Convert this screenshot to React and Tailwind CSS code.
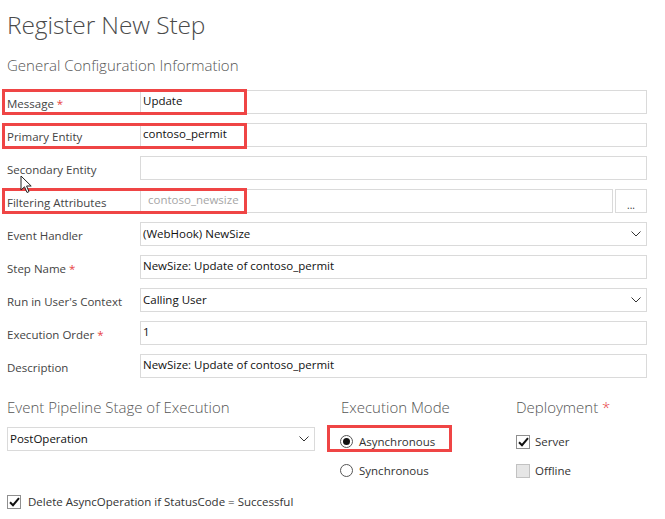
import React from "react";

const Chevron = () => (
  <svg width="10" height="6" viewBox="0 0 10 6" className="shrink-0">
    <path d="M0.5 0.5 L5 5 L9.5 0.5" fill="none" stroke="#333" strokeWidth="1" />
  </svg>
);

const Field = ({ label, req, children }) => (
  <div className="flex items-center h-[24px]">
    <div className="w-[133px] shrink-0 text-[#444] pt-[3px] whitespace-nowrap">
      {label}
      {req && <span className="text-[#e8413f]"> *</span>}
    </div>
    {children}
  </div>
);

const Box = ({ children, muted }) => (
  <div
    className={
      "flex-1 h-full border border-[#dadada] flex items-center pl-[2px] pb-[2px] whitespace-nowrap " +
      (muted ? "text-[#a6a6a6] pl-[7px]" : "text-[#111]")
    }
  >
    {children}
  </div>
);

const Select = ({ children }) => (
  <div className="flex-1 h-full border border-[#dadada] flex items-center justify-between pl-[2px] pr-[5px] pb-[1px] text-[#111] whitespace-nowrap">
    <span>{children}</span>
    <Chevron />
  </div>
);

const Check = ({ checked, disabled }) => (
  <div
    className={
      "w-[14px] h-[14px] border flex items-center justify-center shrink-0 " +
      (disabled ? "bg-[#e6e6e6] border-[#c2c2c2]" : "bg-white border-[#8f8f8f]")
    }
  >
    {checked && (
      <svg width="11" height="10" viewBox="0 0 11 10">
        <path d="M1 5.2 L4 8.2 L10 1.2" fill="none" stroke="#111" strokeWidth="2" />
      </svg>
    )}
  </div>
);

const Radio = ({ checked }) => (
  <div className="w-[13px] h-[13px] rounded-full border border-[#555] flex items-center justify-center shrink-0">
    {checked && <div className="w-[7px] h-[7px] rounded-full bg-[#111]" />}
  </div>
);

const heading = "text-[15px] leading-[20px] text-[#555] font-light whitespace-nowrap";

export default function App() {
  return (
    <div className="relative w-[665px] h-[519px] bg-white overflow-hidden font-['Open_Sans','Noto_Sans',sans-serif] text-[11.5px]">
      <div className="pl-[7px] pr-[18px] pt-[10px]">
        <div className="text-[24.5px] leading-[30px] font-light text-[#4a4a4a] tracking-[-0.1px]">Register New Step</div>
        <div className={"mt-[15px] " + heading}>General Configuration Information</div>

        <div className="mt-[15px] flex flex-col gap-[9px]">
          <Field label="Message" req>
            <Box>Update</Box>
          </Field>
          <Field label="Primary Entity">
            <Box>contoso_permit</Box>
          </Field>
          <Field label="Secondary Entity">
            <Box />
          </Field>
          <Field label="Filtering Attributes">
            <div className="flex flex-1 h-full gap-[2px]">
              <Box muted>contoso_newsize</Box>
              <div className="w-[32px] h-full border border-[#dadada] flex items-end justify-center pb-[1px] text-[10px] leading-[12px] text-[#333]">
                ...
              </div>
            </div>
          </Field>
          <Field label="Event Handler">
            <Select>(WebHook) NewSize</Select>
          </Field>
          <Field label="Step Name" req>
            <Box>NewSize: Update of contoso_permit</Box>
          </Field>
          <Field label="Run in User's Context">
            <Select>Calling User</Select>
          </Field>
          <Field label="Execution Order" req>
            <Box>1</Box>
          </Field>
          <Field label="Description">
            <Box>NewSize: Update of contoso_permit</Box>
          </Field>
        </div>

        <div className="mt-[19px] flex">
          <div className="w-[308px] shrink-0">
            <div className={heading}>Event Pipeline Stage of Execution</div>
            <div className="mt-[10px] h-[24px] flex">
              <Select>PostOperation</Select>
            </div>
          </div>
          <div className="ml-[25px] w-[176px] shrink-0">
            <div className={"pl-[1px] " + heading}>Execution Mode</div>
            <div className="mt-[18px] flex flex-col gap-[16px] text-[#333]">
              <div className="flex items-center gap-[6px] h-[13px]">
                <Radio checked />
                <span>Asynchronous</span>
              </div>
              <div className="flex items-center gap-[6px] h-[13px]">
                <Radio />
                <span>Synchronous</span>
              </div>
            </div>
          </div>
          <div className="shrink-0">
            <div className={heading}>
              Deployment <span className="text-[#e8413f]">*</span>
            </div>
            <div className="mt-[18px] flex flex-col gap-[15px] text-[#333]">
              <div className="flex items-center gap-[5px] h-[14px]">
                <Check checked />
                <span>Server</span>
              </div>
              <div className="flex items-center gap-[5px] h-[14px]">
                <Check disabled />
                <span>Offline</span>
              </div>
            </div>
          </div>
        </div>

        <div className="mt-[17px] flex items-center gap-[7px] h-[14px] text-[#333]">
          <Check checked />
          <span>Delete AsyncOperation if StatusCode = Successful</span>
        </div>
      </div>

      {/* red highlight annotations */}
      <div className="absolute left-[2px] top-[89px] w-[245px] h-[26px] border-[3px] border-[#ef4545]" />
      <div className="absolute left-[2px] top-[123px] w-[245px] h-[26px] border-[3px] border-[#ef4545]" />
      <div className="absolute left-[2px] top-[188px] w-[245px] h-[26px] border-[3px] border-[#ef4545]" />
      <div className="absolute left-[327px] top-[425px] w-[125px] h-[27px] border-[3px] border-[#ef4545]" />

      {/* mouse cursor */}
      <svg className="absolute left-[20px] top-[175px]" width="14" height="20" viewBox="0 0 14 20">
        <path d="M1 1 L1 15 L4.5 11.8 L7 17.5 L9 16.6 L6.6 11 L11.2 11 Z" fill="#fff" stroke="#222" strokeWidth="1" strokeLinejoin="round" />
      </svg>
    </div>
  );
}
